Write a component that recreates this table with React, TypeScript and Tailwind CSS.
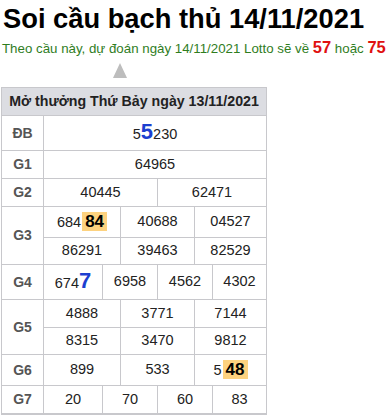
import React from "react";

const F = { fontFamily: '"Liberation Sans", Arial, sans-serif' };

type Cell = { w: number; content: React.ReactNode };

function Row({ label, rows, heights, last }: { label: string; rows: Cell[][]; heights: number[]; last?: boolean }) {
  return (
    <div className={`flex border-t border-[#c8c8cc] ${last ? "border-b-2" : ""}`}>
      <div className="w-[42px] shrink-0 flex items-center justify-center text-[14px] font-bold text-[#555] border-r border-[#c8c8cc]">
        {label}
      </div>
      <div className="flex flex-col flex-1">
        {rows.map((r, i) => (
          <div key={i} className={`flex ${i > 0 ? "border-t border-[#c8c8cc]" : ""}`} style={{ height: heights[i] }}>
            {r.map((c, j) => (
              <div
                key={j}
                className={`flex items-center justify-center text-[14.5px] text-[#222] ${j > 0 ? "border-l border-[#c8c8cc]" : ""}`}
                style={{ width: c.w }}
              >
                {c.content}
              </div>
            ))}
          </div>
        ))}
      </div>
    </div>
  );
}

const Hi = ({ children }: { children: React.ReactNode }) => (
  <span className="bg-[#fdd27f] font-bold text-[17px] text-black px-[3px] leading-[22px] ml-[1px]">{children}</span>
);
const Blue = ({ children }: { children: React.ReactNode }) => (
  <span className="text-[#1c3fd0] font-bold text-[22px] leading-none">{children}</span>
);

export default function App() {
  const c = (w: number, content: React.ReactNode): Cell => ({ w, content });
  return (
    <div className="w-[388px] h-[417px] bg-white overflow-hidden" style={F}>
      <div className="pl-[3px] pt-[1px] text-[27.3px] leading-[36px] font-bold text-black">
        Soi cầu bạch thủ 14/11/2021
      </div>
      <div className="pl-[2px] text-[13.3px] leading-[20px] text-[#2f7d1e] whitespace-nowrap">
        Theo cầu này, dự đoán ngày 14/11/2021 Lotto sẽ về{" "}
        <span className="text-[#e01010] font-bold text-[16.5px]">57</span> hoặc{" "}
        <span className="text-[#e01010] font-bold text-[16.5px]">75</span>
      </div>
      <div className="pl-[113px] pt-[4px] h-[28px]">
        <div className="w-0 h-0 border-l-[7px] border-r-[7px] border-b-[15px] border-l-transparent border-r-transparent border-b-[#bdbdbd]" />
      </div>
      <div className="ml-[1px] w-[266px] border-l border-r border-[#c8c8cc] border-b-[#bdbdc2]">
        <div className="h-[28px] flex items-center justify-center bg-[#dcdde2] border-t border-[#c8c8cc] text-[14.2px] font-bold text-[#222]">
          Mở thưởng Thứ Bảy ngày 13/11/2021
        </div>
        <Row label="ĐB" heights={[34]} rows={[[c(222, <span>5<Blue>5</Blue>230</span>)]]} />
        <Row label="G1" heights={[27]} rows={[[c(222, "64965")]]} />
        <Row label="G2" heights={[27]} rows={[[c(113, "40445"), c(109, "62471")]]} />
        <Row
          label="G3"
          heights={[30, 27]}
          rows={[
            [c(76, <span>684<Hi>84</Hi></span>), c(74, "40688"), c(72, "04527")],
            [c(76, "86291"), c(74, "39463"), c(72, "82529")],
          ]}
        />
        <Row
          label="G4"
          heights={[34]}
          rows={[[c(58, <span>674<Blue>7</Blue></span>), c(55, "6958"), c(55, "4562"), c(54, "4302")]]}
        />
        <Row
          label="G5"
          heights={[27, 27]}
          rows={[
            [c(76, "4888"), c(74, "3771"), c(72, "7144")],
            [c(76, "8315"), c(74, "3470"), c(72, "9812")],
          ]}
        />
        <Row label="G6" heights={[30]} rows={[[c(76, "899"), c(74, "533"), c(72, <span>5<Hi>48</Hi></span>)]]} />
        <Row
          label="G7"
          heights={[27]}
          last
          rows={[[c(58, "20"), c(55, "70"), c(55, "60"), c(54, "83")]]}
        />
      </div>
    </div>
  );
}
